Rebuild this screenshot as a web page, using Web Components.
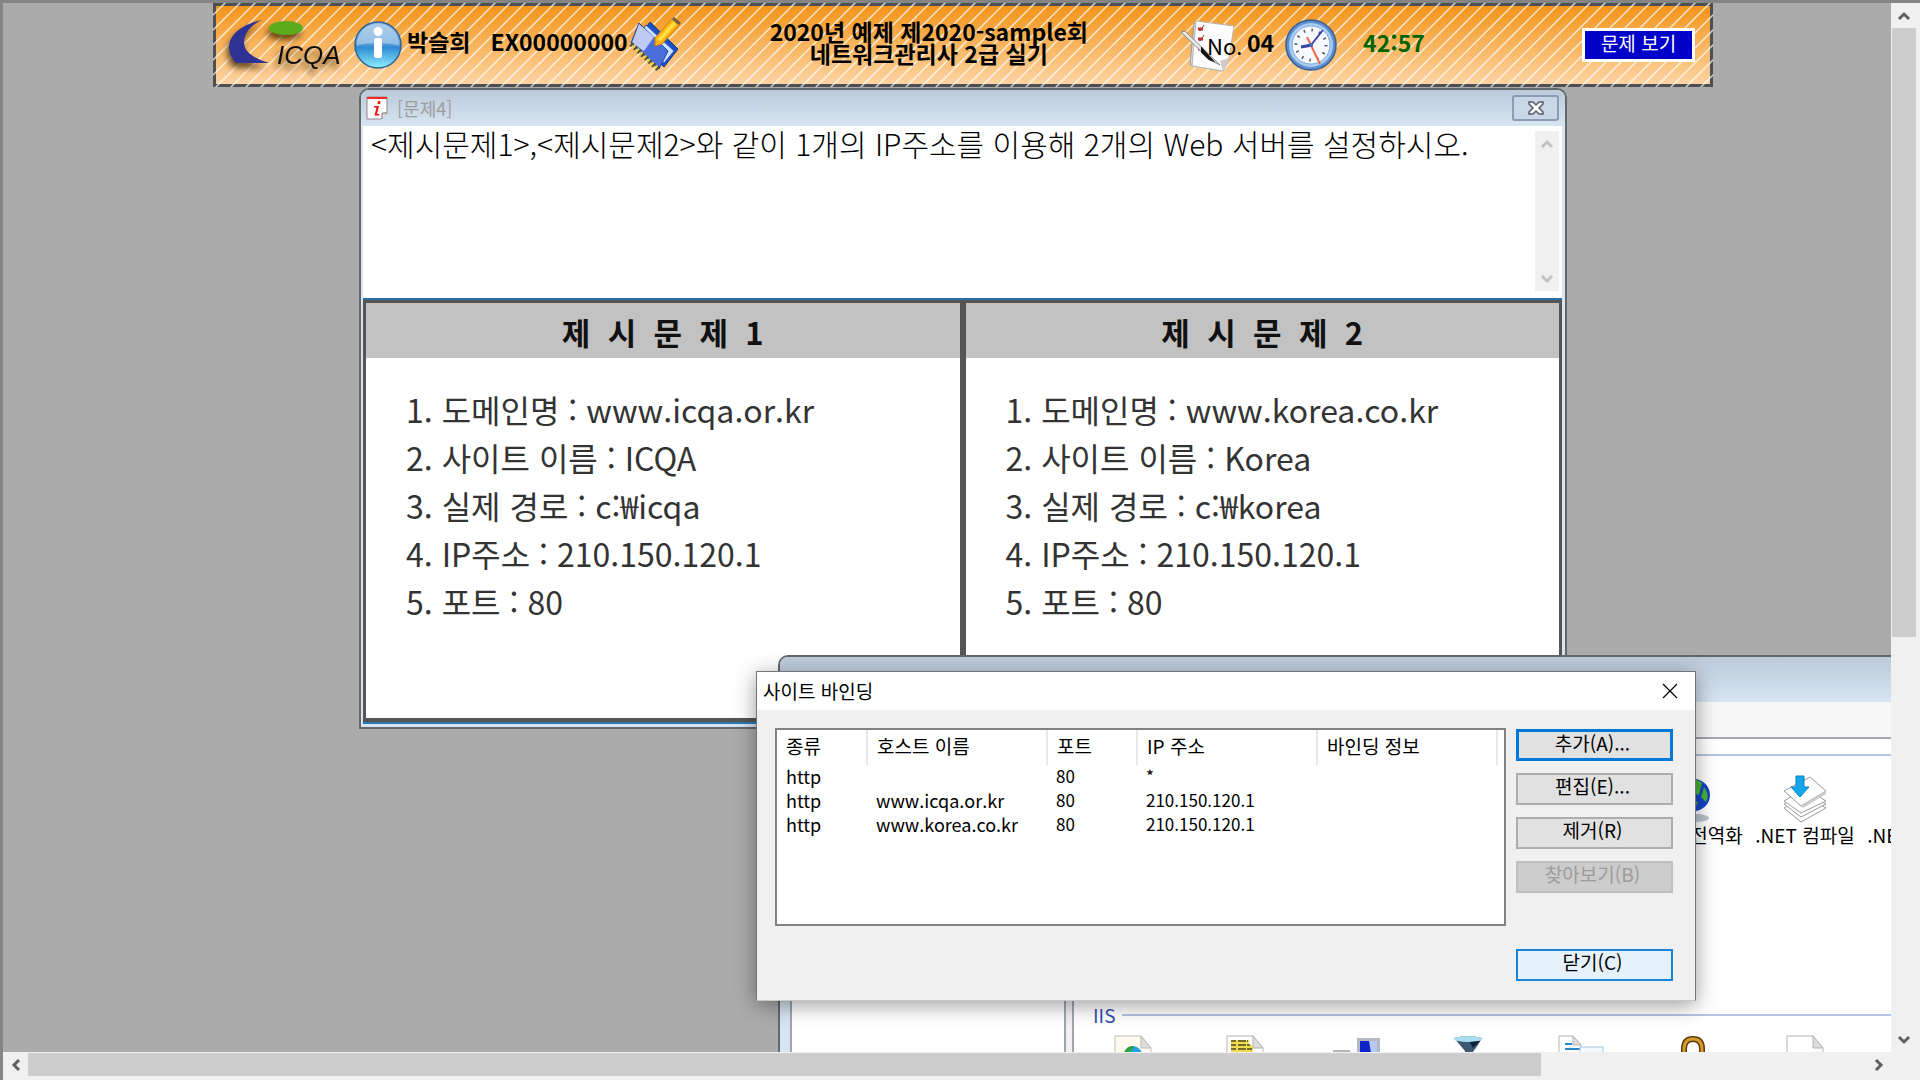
<!DOCTYPE html>
<html lang="ko">
<head>
<meta charset="utf-8">
<title>네트워크관리사 2급 실기</title>
<style>
  html, body { height: 100%; margin: 0; }
  body { overflow: hidden; font-family: "Noto Sans CJK KR", "Liberation Sans", sans-serif; font-size: 19px; line-height: 24px; color: #000; }
</style>
</head>
<body>
<exam-app></exam-app>

<script>
function define(name, html, setup) {
  customElements.define(name, class extends HTMLElement {
    constructor() {
      super();
      this.attachShadow({ mode: 'open' }).innerHTML = html;
    }
    connectedCallback() { if (setup) setup(this, this.shadowRoot); }
  });
}

/* Icons, chosen by name */
const ICONS = {
  logo: `<svg width="124" height="60" viewBox="0 0 124 60">
    <defs><filter id="s" x="-20%" y="-20%" width="150%" height="150%"><feDropShadow dx="-2" dy="5" stdDeviation="3" flood-color="#3a2000" flood-opacity=".75"/></filter></defs>
    <g filter="url(#s)"><path d="M44 5C24 9 11 20 11 32C11 38 14 44 18 48L51 48C38 44 26 38 26 27C26 18 33 10 44 5Z" fill="#2e3092"/>
    <ellipse cx="68" cy="13" rx="17" ry="7" fill="#5cab1f"/>
    <text x="59" y="49" font-family="Liberation Sans, sans-serif" font-size="26" font-weight="400" font-style="italic" fill="#111">ICQA</text></g></svg>`,
  info: `<svg width="48" height="50" viewBox="0 0 48 50">
    <defs><linearGradient id="a" x1="0" y1="0" x2="0" y2="1"><stop offset="0" stop-color="#8db9e4"/><stop offset=".45" stop-color="#6aa6dc"/><stop offset=".55" stop-color="#2f8bd3"/><stop offset="1" stop-color="#8df0ff"/></linearGradient></defs>
    <circle cx="24" cy="25" r="23" fill="url(#a)" stroke="#2f6395" stroke-width="1.5"/>
    <path d="M3 26C3 12 12 4 24 4S45 12 45 26C38 22 10 22 3 26Z" fill="#fff" opacity=".3"/>
    <circle cx="24" cy="11.500" r="4.500" fill="#fff"/><rect x="20" y="18" width="8" height="20" rx="2" fill="#fff"/></svg>`,
  notebook: `<svg width="52" height="56" viewBox="0 0 52 56">
    <g stroke-linejoin="round"><path d="M20 5L48 32L34 50L8 22Z" fill="#1d4fc4" stroke="#12338f"/>
    <path d="M16 8L44 34L34 46L8 20Z" fill="#cfe4ff" stroke="#2d59c8"/>
    <path d="M9 6L38 34L29 52L1 26Z" fill="#4a6fdc" stroke="#24409f"/><path d="M9 7L24 20L14 34L2 26Z" fill="#dbe0fa" opacity=".8"/></g>
    <path d="M1 27L29 53" stroke="#55502a" stroke-width="5" stroke-dasharray="2 3"/><path d="M1 27L29 53" stroke="#e9d34c" stroke-width="4" stroke-dasharray="2 3" stroke-dashoffset="2"/>
    <path d="M25 21L42 2L49 8L32 27L25 29Z" fill="#ffb60f" stroke="#c97c05"/><path d="M28 22L43 5L46 7L31 24Z" fill="#ffe24a"/><path d="M42 2L44 0L51 6L49 8Z" fill="#6b5a45"/></svg>`,
  memo: `<svg width="64" height="54" viewBox="0 0 64 54">
    <path d="M14 5L48 8L42 53L10 47Z" fill="#dcdcdc" stroke="#9a9a9a"/><path d="M16 3L54 8L49 40L43 53L12 48Z" fill="#fcfcfc" stroke="#b5b5b5"/>
    <path d="M18 11h5M18 21h5M18 31h5" stroke="#c33" stroke-width="3"/><path d="M18 10l2 3l4-6M18 20l2 3l4-6" stroke="#933" fill="none"/>
    <path d="M1 14L5 13L40 47L30 42Z" fill="#e8e8e8" stroke="#8a8a8a"/><path d="M22 31L32 42L29 41L22 34Z" fill="#111" stroke="#111" stroke-width="2"/><path d="M49 40L43 53L40 43Z" fill="#ccc"/>
    <text x="27" y="37" font-family="Noto Sans CJK KR, sans-serif" font-size="22" font-weight="400" fill="#000">No.</text></svg>`,
  clock: `<svg width="54" height="54" viewBox="0 0 54 54"><circle cx="27" cy="27" r="25" fill="#5b8fd0" stroke="#3a5d8c" stroke-width="1.500"/><circle cx="27" cy="27" r="22" fill="#a9cdf2"/><circle cx="27" cy="27" r="19" fill="#f6faff" stroke="#7fa8da"/>
    <circle cx="27" cy="27" r="15" fill="none" stroke="#555" stroke-width="3" stroke-dasharray="1.500 6.354"/>
    <path d="M23 19L36 46" stroke="#f26b46" stroke-width="2"/><path d="M27 27L39 12" stroke="#3c3fa8" stroke-width="2"/><path d="M28 27L17 29" stroke="#3c3fa8" stroke-width="3"/><circle cx="27" cy="27" r="2" fill="#3c6fb8"/></svg>`,
  paper: `<svg width="22" height="24" viewBox="0 0 22 24"><path d="M1 1H21V17L15 23H1Z" fill="#fff" stroke="#8b8b8b"/><path d="M1 1H21V3H1Z" fill="#f22"/><path d="M21 17H16V23" fill="#ddd" stroke="#777"/><path d="M12 5h2.500l-.5 3h-2.500zM8 10h5l-2 8h2.500v1.500h-5l2-8H8z" fill="#f11"/></svg>`,
  cross: `<svg width="18" height="14" viewBox="0 0 18 14"><path d="M2 1H6L9 4L12 1H16V3L12 7L16 11V13H12L9 10L6 13H2V11L6 7L2 3Z" fill="#fff" stroke="#565d70" stroke-width="1.500"/></svg>`,
  thin: `<svg width="16" height="16" viewBox="0 0 16 16"><path d="M1 1L15 15M15 1L1 15" stroke="#000" stroke-width="1.200"/></svg>`,
  globe: `<svg width="48" height="48" viewBox="0 0 48 48"><ellipse cx="27" cy="43" rx="13" ry="4" fill="#b9c3d0"/><circle cx="25" cy="20" r="16" fill="#1443c8"/><path d="M14 10Q25 0 33 8L30 20L21 17ZM35 12Q41 20 37 27L32 22ZM17 25L29 27L25 35Z" fill="#46b637"/></svg>`,
  compile: `<svg width="48" height="48" viewBox="0 0 48 48"><g fill="#fff" stroke="#9a9a9a" stroke-linejoin="round"><path d="M3 33L24 20L45 33L20 47Z"/><path d="M3 29L24 16L45 29L20 42Z"/><path d="M3 26L24 13L45 26L20 38Z"/><path d="M3 16L29 2L45 16L20 31Z"/></g><path d="M20 31L45 16L45 19L22 33Z" fill="#ccc"/><path d="M15 1H23V12H28L19 22L10 12H15Z" fill="#14a5ea" stroke="#0a7fc0"/></svg>`,
  page: `<svg width="48" height="48" viewBox="0 0 48 48"><path d="M6 1H32L42 13V47H6Z" fill="#fff" stroke="#b5b5b5"/><path d="M32 1V13H42Z" fill="#ddd" stroke="#b5b5b5"/></svg>`,
  web: `<svg width="48" height="48" viewBox="0 0 48 48"><path d="M6 1H32L42 13V47H6Z" fill="#fffaf0" stroke="#bbb"/><path d="M32 1V13H42Z" fill="#ddd" stroke="#bbb"/><circle cx="24" cy="20" r="9" fill="#2a9fe0"/><path d="M15 18Q18 10 25 11L22 16Z" fill="#2aa53a"/></svg>`,
  script: `<svg width="48" height="48" viewBox="0 0 48 48"><path d="M6 1H32L42 13V47H6Z" fill="#fff" stroke="#b5b5b5"/><path d="M32 1V13H42Z" fill="#ddd" stroke="#b5b5b5"/><path d="M10 5H28V10H32V18H10Z" fill="#f0dc50"/><path d="M10 6h17M10 10h19M10 14h22" stroke="#4a4420" stroke-dasharray="5 2 8 1" stroke-width="1.500"/></svg>`,
  monitor: `<svg width="48" height="48" viewBox="0 0 48 48"><path d="M0 16h17" stroke="#b5b5b5" stroke-width="2"/><path d="M24 3H47V26H24Z" fill="#b3b8c2"/><path d="M27 6H44V24H27Z" fill="#0a24c8"/><path d="M36 6H44V24H39Z" fill="#b9c8f6"/></svg>`,
  funnel: `<svg width="48" height="48" viewBox="0 0 48 48"><path d="M9 3Q23-1 37 3Q33 11 27 18V30H20V16Z" fill="#3b5870"/><ellipse cx="23" cy="4" rx="14" ry="3" fill="#a9dcee"/><path d="M25 7L35 6L28 13Z" fill="#0d2233"/></svg>`,
  servers: `<svg width="48" height="48" viewBox="0 0 48 48"><path d="M2 1H16L24 10V47H2Z" fill="#fff" stroke="#b5b5b5"/><path d="M16 1V10H24Z" fill="#ddd" stroke="#b5b5b5"/><path d="M8 9h7M8 14h16" stroke="#2a86c8" stroke-width="2"/><path d="M23 12H46V30H23Z" fill="#f3faff" stroke="#a9c6de"/></svg>`,
  lock: `<svg width="48" height="48" viewBox="0 0 48 48"><path d="M15 24V14Q15 4 24 4T33 14V24" fill="none" stroke="#5c3b08" stroke-width="6"/><path d="M15 24V14Q15 4 24 4T33 14V24" fill="none" stroke="#d59a2c" stroke-width="3"/></svg>`
};
define('ui-icon', `<style>:host{display:block;flex:none}svg{display:block;overflow:visible}</style><span></span>`,
  (el, root) => { root.querySelector('span').innerHTML = ICONS[el.getAttribute('name')] || ''; });

/* Scroll bar: arrow button, thumb, arrow button */
define('scroll-bar', `<style>
  :host{display:flex;flex-direction:column;width:24px;background:#f0f0f0;color:#606060}
  :host([horizontal]){flex-direction:row;width:auto;height:23px}
  button{flex:none;display:grid;place-items:center;width:24px;height:25px;padding:0;border:0;background:none;color:inherit}
  :host([horizontal]) button{height:23px;width:25px}
  svg{display:block}
  :host([horizontal]) svg{transform:rotate(-90deg)}
  .track{flex:1;display:flex;flex-direction:inherit;min-width:0;min-height:0}
  .thumb{flex:var(--thumb,0) 0 0}
  .thumb{background:#cdcdcd}
  .rest{flex:var(--rest,1) 0 0}
</style>
<button aria-label="이전"><svg width="14" height="12" viewBox="0 0 14 12"><path d="M2 9L7 4L12 9" fill="none" stroke="currentColor" stroke-width="3"/></svg></button>
<div class="track"><div class="thumb"></div><div class="rest"></div></div>
<button aria-label="다음"><svg width="14" height="12" viewBox="0 0 14 12"><path d="M2 3L7 8L12 3" fill="none" stroke="currentColor" stroke-width="3"/></svg></button>`);

/* Exam status banner */
define('exam-banner', `<style>
  :host{display:block;position:relative;box-sizing:border-box;height:84px;border:3px solid #4c5053;background:linear-gradient(#f39419,#fed4a2);font-weight:700}
  .lines{position:absolute;inset:-3px;width:calc(100% + 6px);height:84px}
  .row{position:relative;display:flex;align-items:center;height:78px;box-sizing:border-box;padding:0 15px 0 2px}
  .who{display:flex;gap:20px;margin:0 2px 8px 5px;font-size:23px}
  h1{margin:0 92px 6px 88px;text-align:center;font-size:23px;line-height:22px;font-weight:700;white-space:nowrap}
  .num{margin:0 10px 6px 3px;font-size:23px}
  .time{margin:0 auto 6px 25px;font-size:23px;color:#006400}
  button{height:34px;width:113px;padding:0 0 4px;border:3px solid #fff;background:#0000c8;color:#fff;font:400 19px/24px "Noto Sans CJK KR",sans-serif}
</style>
<svg class="lines" aria-hidden="true"><defs><pattern id="p" width="15" height="15" patternUnits="userSpaceOnUse"><path d="M-3 15L15 -3M-3 30L30 -3M9 18L18 9" stroke="#fff" stroke-opacity=".75" stroke-width="1.500"/></pattern></defs><rect width="100%" height="100%" fill="url(#p)"/></svg>
<div class="row">
  <ui-icon name="logo"></ui-icon><ui-icon name="info" style="margin-left:12px"></ui-icon>
  <div class="who"><span>박슬희</span><span>EX00000000</span></div>
  <ui-icon name="notebook"></ui-icon>
  <h1>2020년 예제 제2020-sample회<br>네트워크관리사 2급 실기</h1>
  <ui-icon name="memo"></ui-icon><span class="num">04</span><ui-icon name="clock"></ui-icon><span class="time">42:57</span>
  <button>문제 보기</button>
</div>`);

/* MDI child window */
define('mdi-window', `<style>
  :host{display:flex;flex-direction:column;box-sizing:border-box;border:2px solid #63686d;border-radius:10px 10px 0 0;background:#d7e4f2;overflow:hidden}
  header{flex:none;display:flex;align-items:center;gap:9px;height:36px;padding:0 6px 0 5px;background:linear-gradient(#bccad9,#d7e4f2);color:#9c9ea0;font-size:18px}
  .title{flex:1}
  button{display:grid;place-items:center;width:47px;height:26px;padding:0;border:2px solid #8e9bb5;border-radius:3px;background:#c8d6e5}
  .body{flex:1;display:flex;flex-direction:column;min-height:0;margin:0 3px 3px 2px;background:#fff}
</style>
<header><ui-icon name="paper"></ui-icon><span class="title"><slot name="title"></slot></span><button aria-label="닫기"><ui-icon name="cross"></ui-icon></button></header>
<div class="body"><slot></slot></div>`);

define('question-text', `<style>
  :host{display:flex;height:172px;box-sizing:border-box;padding:5px 3px 7px 8px;background:#fff}
  textarea{flex:1;min-width:0;margin:-7px 0 0;padding:0;border:0;resize:none;outline:0;overflow:hidden;background:none;color:#000;font:300 30px/38px "Noto Sans CJK KR",sans-serif}
  scroll-bar{color:#c2c2c2}
</style><textarea readonly aria-label="문제">&lt;제시문제1&gt;,&lt;제시문제2&gt;와 같이 1개의 IP주소를 이용해 2개의 Web 서버를 설정하시오.</textarea><scroll-bar></scroll-bar>`);

define('given-card', `<style>
  :host{flex:1;display:flex;flex-direction:column;background:#fff;color:#333}
  h2{margin:0;height:55px;background:#c2c2c2;color:#111;text-align:center;white-space:pre;font-size:31px;line-height:57px;font-weight:700}
  div{padding:27px 0 0 40px;font-size:32px;line-height:48px;white-space:nowrap}
  ::slotted(p){margin:0}
</style><h2><slot name="head"></slot></h2><div><slot></slot></div>`);

/* Binding table */
define('binding-list', `<style>
  :host{display:block;box-sizing:border-box;border:2px solid #828282;background:#fff;height:198px}
  table{width:720px;border-collapse:collapse;table-layout:fixed;text-align:left}
  th,td{box-sizing:border-box;padding:0 0 2px 9px;white-space:nowrap;font-weight:400}
  th{height:35px;padding-bottom:4px;font-size:19px;border-right:2px solid #e8e8e8}
  td{height:24px;font-size:18px;line-height:22px}
  .n{font-size:17px}
</style>
<table><colgroup><col style="width:90px"><col style="width:180px"><col style="width:90px"><col style="width:180px"><col style="width:180px"></colgroup>
<thead><tr><th>종류</th><th>호스트 이름</th><th>포트</th><th>IP 주소</th><th>바인딩 정보</th></tr></thead>
<tbody><tr><td>http</td><td></td><td class="n">80</td><td class="n">*</td><td></td></tr>
<tr><td>http</td><td>www.icqa.or.kr</td><td class="n">80</td><td class="n">210.150.120.1</td><td></td></tr>
<tr><td>http</td><td>www.korea.co.kr</td><td class="n">80</td><td class="n">210.150.120.1</td><td></td></tr></tbody></table>`);

define('push-button', `<style>
  :host{display:block}
  button{display:block;width:100%;height:32px;padding:0 4px 6px 0;border:2px solid #adadad;background:#e1e1e1;color:#000;font:400 19px/22px "Noto Sans CJK KR",sans-serif}
  :host([kind=default]) button{border:3px solid #0078d7}
  :host([kind=hover]) button{border-color:#1883d7;background:#e5f1fb}
  button:disabled{background:#ccc;border-color:#bfbfbf;color:#9c9c9c}
</style><button><slot></slot></button>`, (el, root) => { root.querySelector('button').disabled = el.hasAttribute('disabled'); });

define('binding-dialog', `<style>
  :host{display:flex;flex-direction:column;box-sizing:border-box;border:1px solid #70757a;border-bottom-color:#c8c8c8;background:#f0f0f0;box-shadow:0 4px 20px rgba(0,0,0,.4)}
  header{display:flex;align-items:center;justify-content:space-between;height:38px;padding:0 17px 0 6px;background:#fff}
  header button{padding:0;border:0;background:none}
  .body{flex:1;display:flex;gap:10px;padding:18px 22px 19px 18px}
  binding-list{flex:1}
  .acts{display:flex;flex-direction:column;gap:12px;width:157px;padding-top:1px}
  .last{margin-top:auto}
</style>
<header><span>사이트 바인딩</span><button aria-label="닫기"><ui-icon name="thin"></ui-icon></button></header>
<div class="body"><binding-list></binding-list>
<div class="acts"><push-button kind="default">추가(A)...</push-button><push-button>편집(E)...</push-button><push-button>제거(R)</push-button><push-button disabled>찾아보기(B)</push-button><push-button class="last" kind="hover">닫기(C)</push-button></div></div>`);

/* IIS manager window */
define('iis-window', `<style>
  :host{display:flex;flex-direction:column;box-sizing:border-box;border:solid #63686d;border-width:2px 0 0 2px;border-radius:10px 0 0 0;background:#d7e4f2;overflow:hidden}
  .title{flex:none;height:45px;background:linear-gradient(#bccad9,#d7e4f2)}
  .menu{flex:none;height:35px;margin-left:10px;background:#f7f7f7;border-bottom:2px solid #a3a7b0}
  .main{flex:1;display:flex;min-height:0;margin-left:10px;border-left:2px solid #a0a5ad;background:#fff}
  .tree{flex:0 0 272px}
  .split{flex:0 0 6px;background:#f0f0f0;border:solid #a0a5ad;border-width:0 2px}
  .view{flex:1;min-width:0;overflow:hidden}
  .group{display:flex;align-items:center;gap:7px;height:24px;padding-left:19px;color:#3150b0}
  .group::after{content:"";flex:1;height:2px;background:#b4c4e2}
  .grid{display:grid;grid-template-columns:repeat(8,112px);padding-left:3px}
  .cell{display:flex;flex-direction:column;align-items:center;white-space:nowrap}
  .top{height:236px;padding-top:8px;box-sizing:border-box}
  .low{padding-top:8px}
  .lead{padding-top:4px}
</style>
<div class="title"></div><div class="menu"></div>
<div class="main"><div class="tree"></div><div class="split"></div>
<div class="view">
  <div class="group lead"></div>
  <div class="grid top"><span></span><span></span><span></span><span></span><span></span>
    <div class="cell"><ui-icon name="globe"></ui-icon>.NET 전역화</div><div class="cell"><ui-icon name="compile"></ui-icon>.NET 컴파일</div><div class="cell"><ui-icon name="page" style="visibility:hidden"></ui-icon>.NET 프로필</div></div>
  <div class="group">IIS</div>
  <div class="grid low">${['web','script','monitor','funnel','servers','lock','page'].map(n => `<div class="cell"><ui-icon name="${n}"></ui-icon></div>`).join('')}</div>
</div></div>`);

/* Whole application: workspace with two scroll bars, windows placed on it */
define('exam-app', `<style>
  :host{display:grid;box-sizing:border-box;height:100vh;grid-template:minmax(0,1fr) auto / minmax(0,1fr) auto;gap:1px;padding:0 4px 4px 0;border:solid #858585;border-width:3px 0 0 3px;background:#f0f0f0}
  .desk{position:relative;overflow:hidden;background:#ababab}
  .desk > *{position:absolute}
  exam-banner{left:210px;top:0;width:1500px}
  .q{left:356px;top:85px;width:1208px;height:641px}
  .cards{flex:1;display:flex;gap:6px;padding:3px 3px 4px;background:#555;border-top:2px solid #2b6ea3;border-bottom:2px solid #2b7ab8}
  iis-window{left:775px;top:652px;right:0;bottom:0}
  binding-dialog{left:753px;top:668px;width:940px;height:330px}
  .v{--thumb:61;--rest:39}
  .h{--thumb:823;--rest:177}
</style>
<div class="desk">
  <exam-banner></exam-banner>
  <mdi-window class="q"><span slot="title">[문제4]</span>
    <question-text></question-text>
    <div class="cards">
      <given-card><span slot="head">제  시  문  제  1</span><p>1. 도메인명 : www.icqa.or.kr</p><p>2. 사이트 이름 : ICQA</p><p>3. 실제 경로 : c:₩icqa</p><p>4. IP주소 : 210.150.120.1</p><p>5. 포트 : 80</p></given-card>
      <given-card><span slot="head">제  시  문  제  2</span><p>1. 도메인명 : www.korea.co.kr</p><p>2. 사이트 이름 : Korea</p><p>3. 실제 경로 : c:₩korea</p><p>4. IP주소 : 210.150.120.1</p><p>5. 포트 : 80</p></given-card>
    </div>
  </mdi-window>
  <iis-window></iis-window>
  <binding-dialog></binding-dialog>
</div>
<scroll-bar class="v"></scroll-bar>
<scroll-bar class="h" horizontal></scroll-bar>`);
</script>
</body>
</html>
